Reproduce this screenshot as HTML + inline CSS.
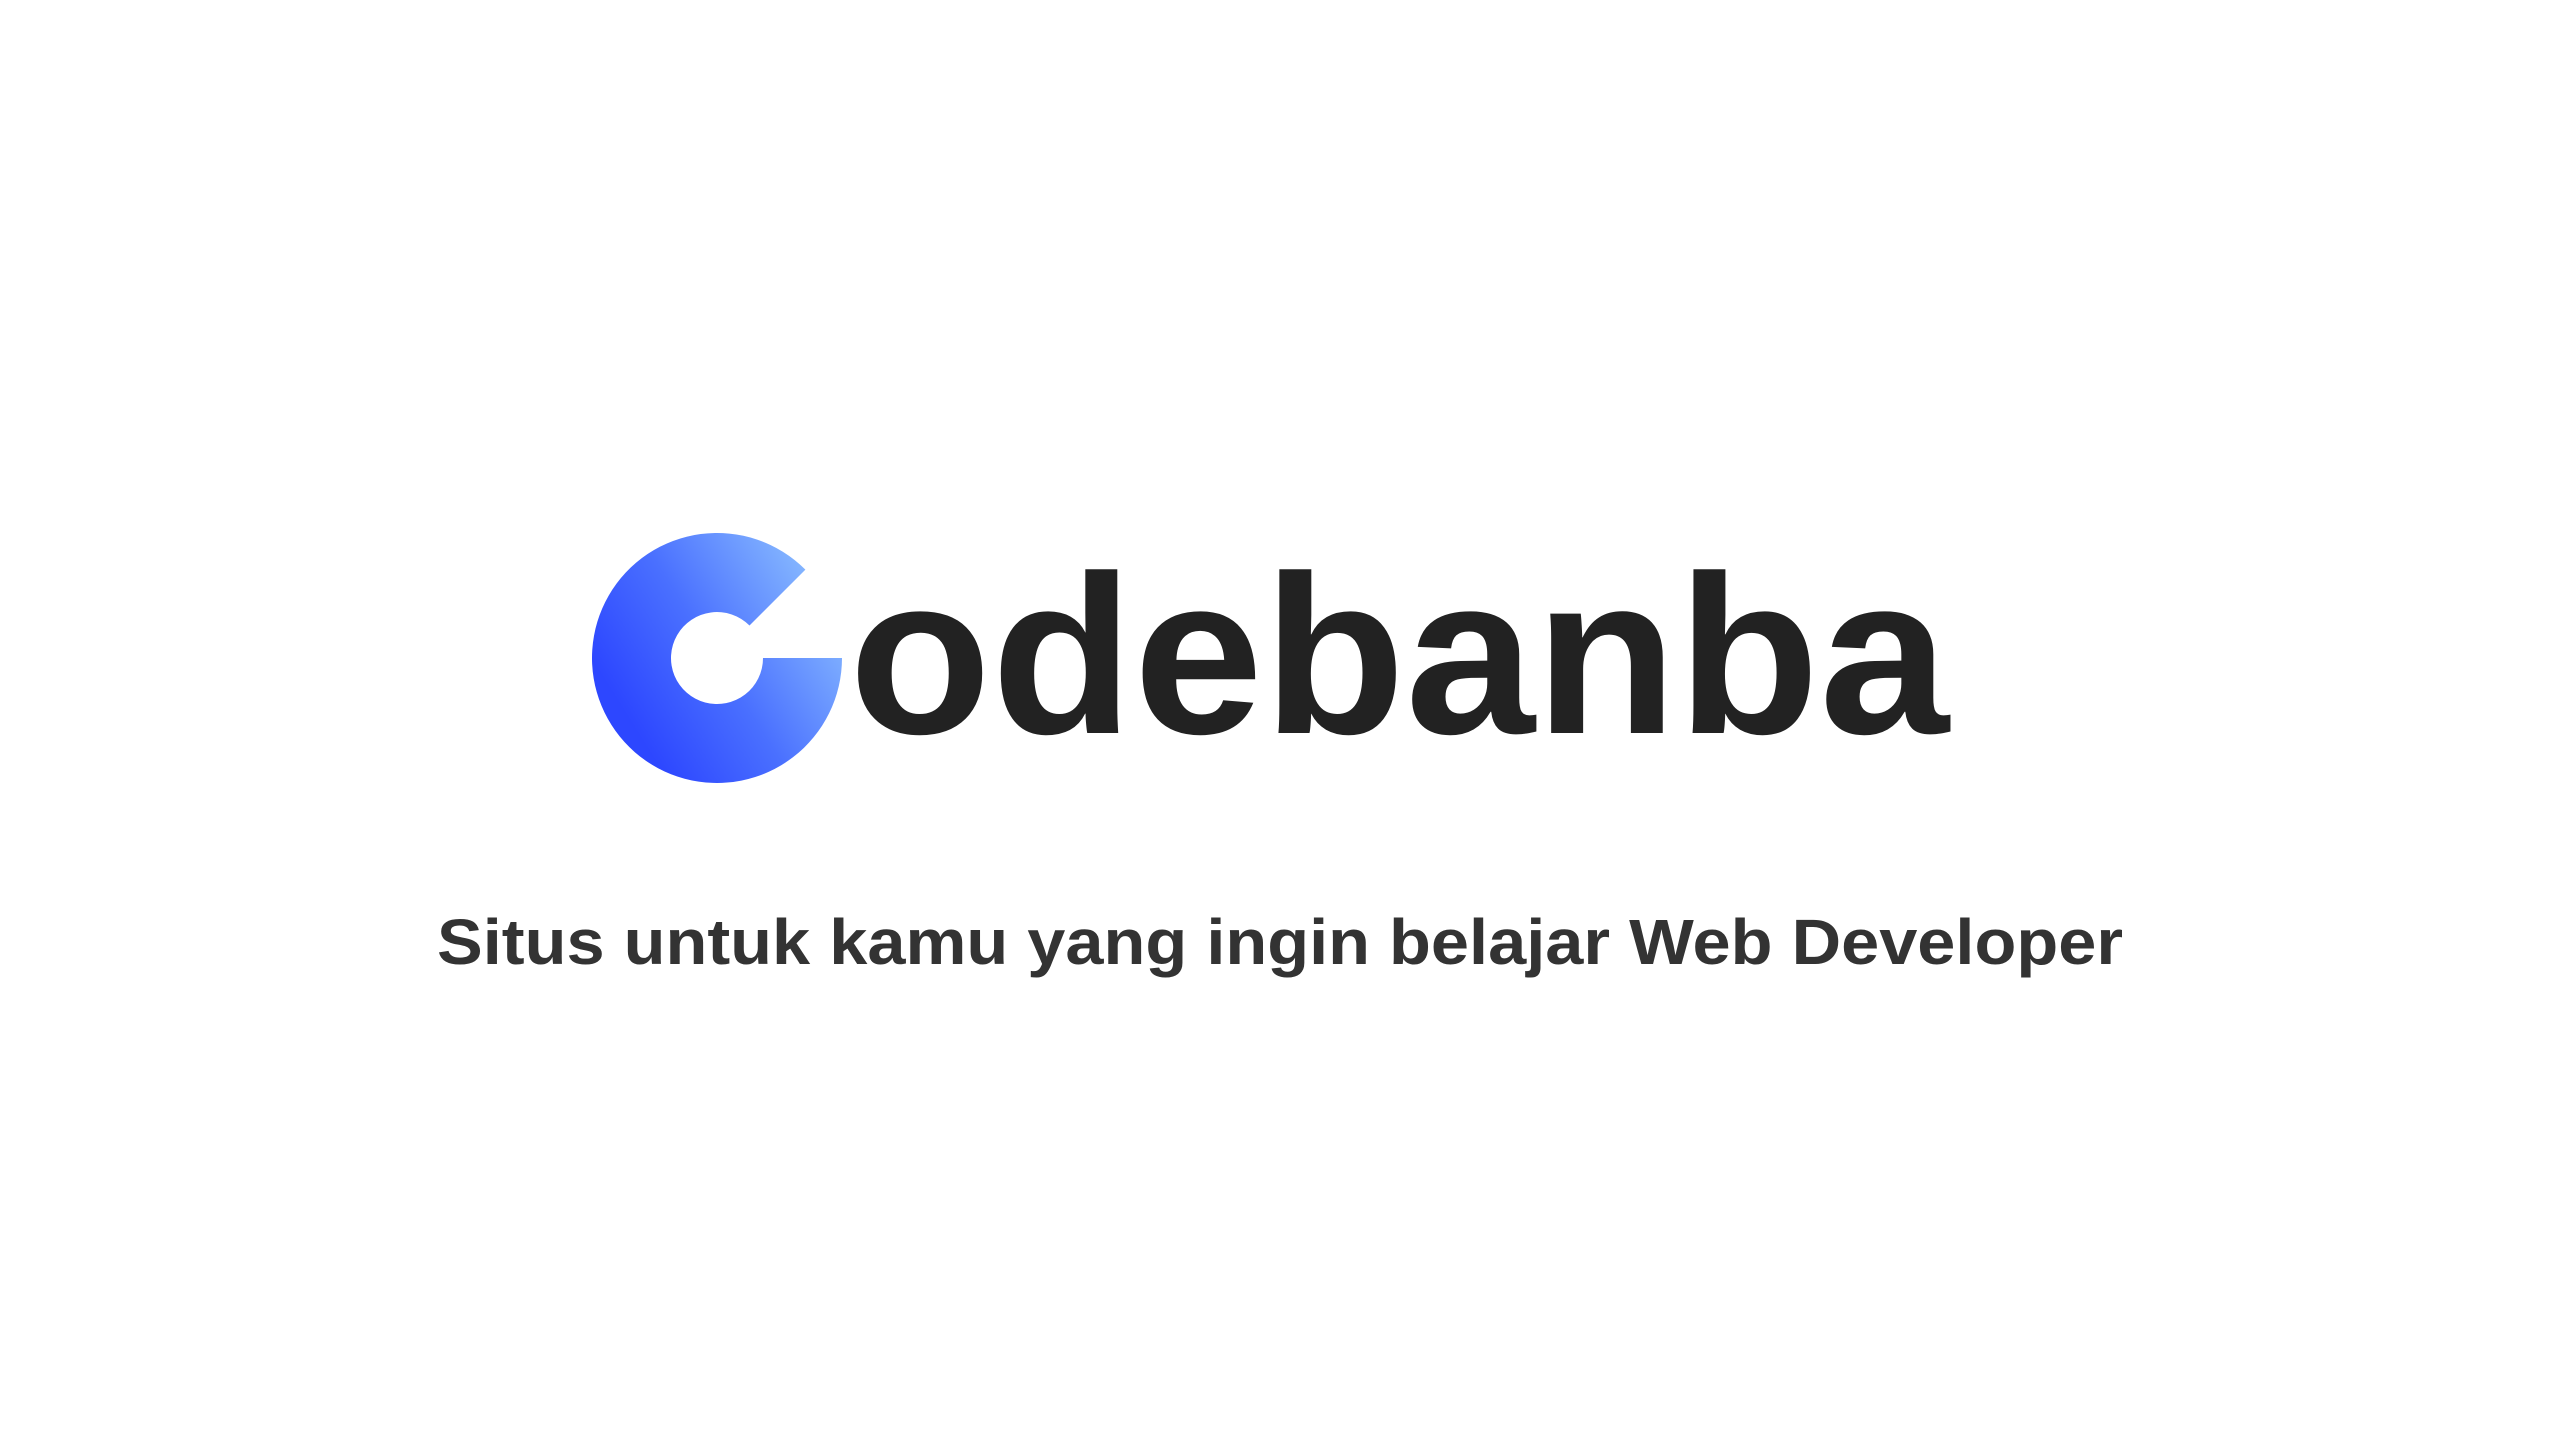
<!DOCTYPE html>
<html><head><meta charset="utf-8"><style>html,body{margin:0;padding:0;background:#fff;width:2560px;height:1440px;overflow:hidden}</style></head>
<body>
<svg width="2560" height="1440" viewBox="0 0 2560 1440" xmlns="http://www.w3.org/2000/svg">
<defs>
<linearGradient id="g" x1="0.15" y1="0.75" x2="0.95" y2="0.25">
<stop offset="0" stop-color="#2D47FF"/>
<stop offset="0.45" stop-color="#4A70FF"/>
<stop offset="1" stop-color="#86B8FF"/>
</linearGradient>
</defs>
<g transform="translate(-3,-3)">
<path d="M808.4,572.6 A125,125 0 1 0 845,661 L766,661 A46,46 0 1 1 752.5,628.5 Z" fill="url(#g)"/>
</g>
<text x="849" y="733" font-family="Liberation Sans, sans-serif" font-weight="bold" font-size="226" fill="#222" textLength="1100" lengthAdjust="spacingAndGlyphs">odebanba</text>
<text x="437" y="964" font-family="Liberation Sans, sans-serif" font-weight="bold" font-size="64" fill="#333" textLength="1686" lengthAdjust="spacingAndGlyphs">Situs untuk kamu yang ingin belajar Web Developer</text>
</svg>
</body></html>
